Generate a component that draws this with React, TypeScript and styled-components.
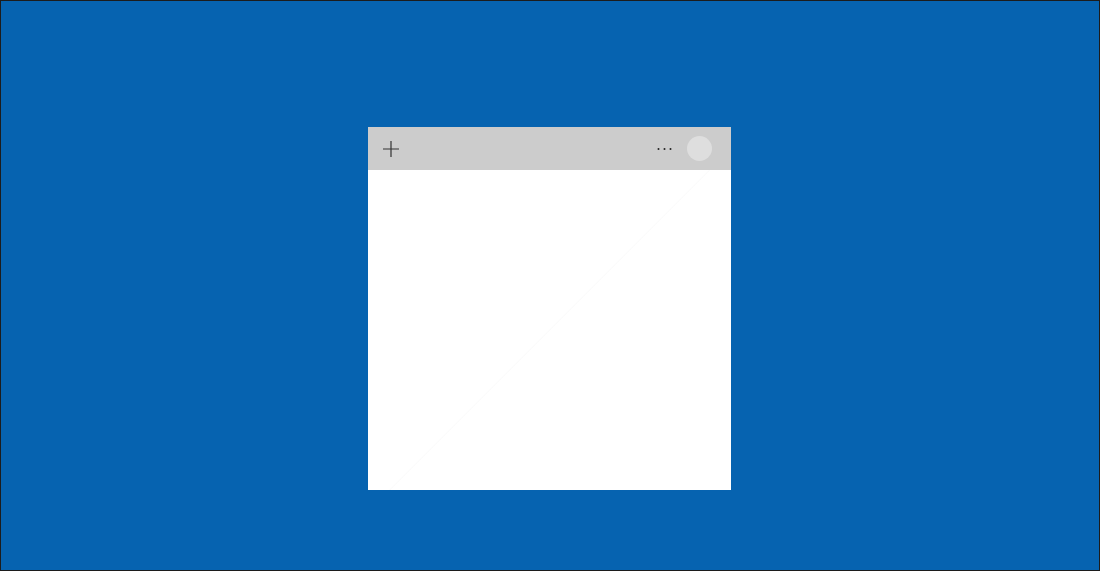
import styled, { createGlobalStyle } from "styled-components";

const Global = createGlobalStyle`
    html, body {
        margin: 0;
        padding: 0;
        font-family: "Segoe UI", "Open Sans", sans-serif;
    }
`;

const Desktop = styled.div`
    box-sizing: border-box;
    width: 1100px;
    height: 571px;
    background-color: #0663b0;
    border: 1px solid #1c1c1c;
    display: flex;
    flex-direction: column;
    align-items: center;
    padding-top: 126px;
`;

const Note = styled.div`
    width: 363px;
    height: 363px;
    margin-right: 1px;
    background-color: #ffffff;
    display: flex;
    flex-direction: column;
`;

const TitleBar = styled.div`
    height: 43px;
    background-color: #cccccc;
    display: flex;
    align-items: center;
    padding: 0 19px 0 14px;
    gap: 13px;
`;

const IconButton = styled.button`
    border: 0;
    background: transparent;
    padding: 0;
    width: 18px;
    height: 18px;
    display: grid;
    place-items: center;
    color: #333333;
`;

const Spacer = styled.div`
    flex: 1;
`;

const Avatar = styled.div`
    width: 25px;
    height: 25px;
    border-radius: 50%;
    background-color: #dedede;
`;

const Body = styled.div`
    flex: 1;
    background: linear-gradient(135deg, #ffffff 49.9%, #f9f9f9 50%, #ffffff 50.2%);
`;

export default function App() {
    return (
        <>
            <Global />
            <Desktop>
                <Note>
                    <TitleBar>
                        <IconButton aria-label="New note">
                            <svg width="18" height="18" viewBox="0 0 18 18">
                                <path d="M9 1v16M1 9h16" stroke="#333" strokeWidth="1.2" fill="none" />
                            </svg>
                        </IconButton>
                        <Spacer />
                        <IconButton aria-label="Menu">
                            <svg width="18" height="18" viewBox="0 0 18 18">
                                <circle cx="2.5" cy="9" r="1" fill="#222" />
                                <circle cx="8.5" cy="9" r="1" fill="#222" />
                                <circle cx="14.5" cy="9" r="1" fill="#222" />
                            </svg>
                        </IconButton>
                        <Avatar />
                    </TitleBar>
                    <Body />
                </Note>
            </Desktop>
        </>
    );
}
